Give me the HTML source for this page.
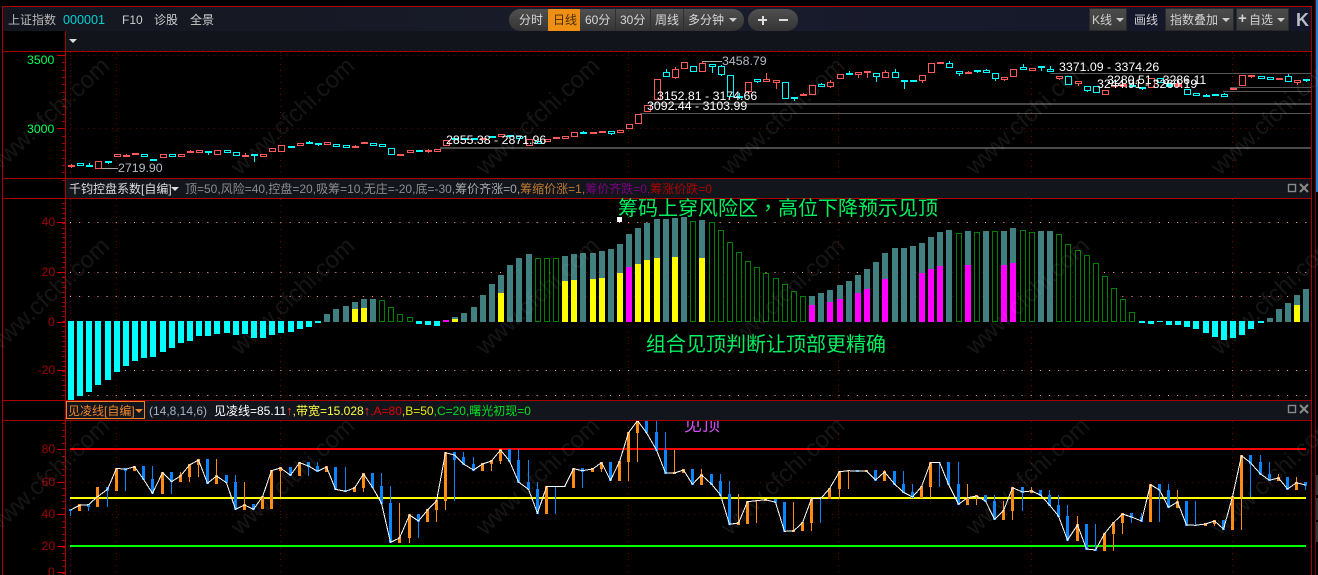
<!DOCTYPE html>
<html lang="zh">
<head>
<meta charset="utf-8">
<title>上证指数 K线</title>
<style>
html,body{margin:0;padding:0;background:#000;width:1318px;height:575px;overflow:hidden}
#r{position:relative;width:1318px;height:575px;overflow:hidden;background:#000;font-family:"Liberation Sans","Noto Sans CJK SC",sans-serif}
.a{position:absolute}
.t{position:absolute;white-space:nowrap;font-size:12px;line-height:14px}
.n{font-size:12.35px}
.ax{font-size:12.3px}
.up{display:inline-block;width:6.5px;font-size:13px;font-weight:bold;color:#ff3030;text-align:center;line-height:12px}
svg{position:absolute;left:0;top:0}
.pill{position:absolute;background:linear-gradient(#505050,#343434);border-radius:11px}
.btn{position:absolute;top:8px;height:23px;background:linear-gradient(#4c4c4c,#383838);border:1px solid #2a2a2a;box-sizing:border-box}
.car{position:absolute;width:0;height:0;border-left:4px solid transparent;border-right:4px solid transparent;border-top:4px solid #ccc}
.big{position:absolute;white-space:nowrap;font-size:20px;line-height:24px;color:#00f060;font-family:"Liberation Sans","Noto Sans CJK SC",sans-serif}
</style>
</head>
<body>
<div id="r">
  <div class="a" style="left:3px;top:7px;width:1308px;height:24px;background:linear-gradient(90deg,#14161f,#191c2b 50%,#14172a)"></div>
  <div class="a" style="left:66px;top:31px;width:1245px;height:20px;background:#12141b"></div>
  <div class="a" style="left:66px;top:179px;width:1245px;height:19px;background:#13151c"></div>
  <div class="a" style="left:66px;top:401px;width:1245px;height:19px;background:#13151c"></div>

  <svg id="c" width="1318" height="575" viewBox="0 0 1318 575"></svg>

  <!-- toolbar left -->
  <span class="t" style="left:8px;top:13px;color:#b9b9b9">上证指数</span>
  <span class="t" style="left:63px;top:13px;color:#00d2d2;font-size:12.6px">000001</span>
  <span class="t" style="left:122px;top:13px;color:#cfcfcf">F10</span>
  <span class="t" style="left:154px;top:13px;color:#cfcfcf">诊股</span>
  <span class="t" style="left:190px;top:13px;color:#cfcfcf">全景</span>
  <div class="car" style="left:69px;top:39px;border-top-color:#ddd"></div>

  <!-- center pills -->
  <div class="pill" style="left:509px;top:9px;width:235px;height:22px"></div>
  <div class="a" style="left:548px;top:9px;width:32px;height:22px;background:#ef9015"></div>
  <div class="a" style="left:615px;top:9px;width:1px;height:22px;background:#2e2e2e"></div>
  <div class="a" style="left:650px;top:9px;width:1px;height:22px;background:#2e2e2e"></div>
  <div class="a" style="left:683px;top:9px;width:1px;height:22px;background:#2e2e2e"></div>
  <span class="t" style="left:519px;top:13px;color:#d8d8d8">分时</span>
  <span class="t" style="left:553px;top:13px;color:#4a2c00">日线</span>
  <span class="t" style="left:585px;top:13px;color:#d8d8d8">60分</span>
  <span class="t" style="left:620px;top:13px;color:#d8d8d8">30分</span>
  <span class="t" style="left:655px;top:13px;color:#d8d8d8">周线</span>
  <span class="t" style="left:688px;top:13px;color:#d8d8d8">多分钟</span>
  <div class="car" style="left:729px;top:18px"></div>
  <div class="pill" style="left:748px;top:9px;width:50px;height:22px"></div>
  <div class="a" style="left:758px;top:19px;width:9px;height:2px;background:#ddd"></div>
  <div class="a" style="left:761.5px;top:15.5px;width:2px;height:9px;background:#ddd"></div>
  <div class="a" style="left:779px;top:19px;width:9px;height:2px;background:#ddd"></div>

  <!-- toolbar right -->
  <div class="btn" style="left:1089px;width:38px"></div>
  <span class="t" style="left:1092px;top:13px;color:#d0d0d0">K线</span>
  <div class="car" style="left:1116px;top:18px"></div>
  <span class="t" style="left:1134px;top:13px;color:#d0d0d0">画线</span>
  <div class="btn" style="left:1165px;width:69px"></div>
  <span class="t" style="left:1170px;top:13px;color:#d0d0d0">指数叠加</span>
  <div class="car" style="left:1222px;top:18px"></div>
  <div class="btn" style="left:1236px;width:53px"></div>
  <span class="t" style="left:1238px;top:12px;color:#d0d0d0;font-weight:bold;font-size:15px">+</span>
  <span class="t" style="left:1249px;top:13px;color:#d0d0d0">自选</span>
  <div class="car" style="left:1277px;top:18px"></div>
  <span class="t" style="left:1296px;top:9px;color:#b8bcc4;font-size:18px;line-height:22px;font-weight:bold">K</span>

  <!-- axis labels -->
  <span class="t ax" style="left:27px;top:53px;color:#00ff55">3500</span>
  <span class="t ax" style="left:27px;top:122px;color:#00ff55">3000</span>
  <span class="t ax" style="left:41.5px;top:215px;color:#a00000">40</span>
  <span class="t ax" style="left:41.5px;top:265px;color:#a00000">20</span>
  <span class="t ax" style="left:48px;top:315px;color:#a00000">0</span>
  <span class="t ax" style="left:37.5px;top:363px;color:#a00000">-20</span>
  <span class="t ax" style="left:41.5px;top:442px;color:#a00000">80</span>
  <span class="t ax" style="left:41.5px;top:475px;color:#a00000">60</span>
  <span class="t ax" style="left:41.5px;top:507px;color:#a00000">40</span>
  <span class="t ax" style="left:41.5px;top:539px;color:#a00000">20</span>
  <span class="t ax" style="left:48px;top:565px;color:#a00000">0</span>

  <!-- price labels -->
  <span class="t n" style="left:118px;top:161px;color:#b4bcc8">2719.90</span>
  <span class="t n" style="left:722px;top:54px;color:#b4bcc8">3458.79</span>
  <span class="t n" style="left:657px;top:89px;color:#fff">3152.81 - 3174.66</span>
  <span class="t n" style="left:647px;top:98.5px;color:#fff">3092.44 - 3103.99</span>
  <span class="t n" style="left:446px;top:132.5px;color:#fff">2855.38 - 2871.96</span>
  <span class="t n" style="left:1059px;top:60px;color:#fff">3371.09 - 3374.26</span>
  <span class="t n" style="left:1107px;top:73px;color:#fff">3280.51 - 3286.11</span>
  <span class="t n" style="left:1097px;top:77px;color:#fff">3244.91 - 3260.19</span>

  <!-- panel 2 header -->
  <span class="t" style="left:69px;top:182px;color:#dcdcdc">千钧控盘系数[自编]</span>
  <div class="car" style="left:171px;top:187px;border-top-color:#ddd"></div>
  <span class="t" style="left:185px;top:182px;color:#8c8c8c">顶=50,风险=40,控盘=20,吸筹=10,无庄=-20,底=-30,<span style="color:#a8a8a8">筹价齐涨=0,</span><span style="color:#c07a30">筹缩价涨=1,</span><span style="color:#800080">筹价齐跌=0,</span><span style="color:#b00000">筹涨价跌=0</span></span>

  <!-- panel 3 header -->
  <div class="a" style="left:66px;top:401px;width:79px;height:18px;border:1px solid #f08428;box-sizing:border-box"></div>
  <span class="t" style="left:68px;top:404px;color:#f08428">见凌线[自编]</span>
  <div class="car" style="left:135px;top:409px;border-top-color:#f08428"></div>
  <span class="t" style="left:149px;top:404px;color:#a4b4c4">(14,8,14,6)</span>
  <span class="t" style="left:214px;top:404px;color:#fff">见凌线=85.11<span class="up">↑</span><span style="color:#ffff40">,带宽=15.028</span><span class="up">↑</span><span style="color:#e00000">,A=80</span><span style="color:#e8e800">,B=50</span><span style="color:#00e020">,C=20,曙光初现=0</span></span>

  <!-- annotations -->
  <span class="big" style="left:618px;top:195px">筹码上穿风险区<span lang="zh-TW" style="font-family:'Noto Sans CJK TC',sans-serif">，</span>高位下降预示见顶</span>
  <span class="big" style="left:646px;top:333px">组合见顶判断让顶部更精确</span>
  <div class="a" style="left:680px;top:421px;width:44px;height:13px;overflow:hidden">
    <span class="t" style="left:4px;top:-6px;font-size:18px;line-height:20px;color:#d050f0">见顶</span>
  </div>
  <div class="a" style="left:617px;top:217px;width:5px;height:5px;background:#fff"></div>

  <svg id="w" width="1318" height="575" viewBox="0 0 1318 575" style="pointer-events:none"></svg>
</div>
<script>
(function(){
var svg=document.getElementById('c'),out='';
function X(i){return Math.round(68+9.15*i)}
function rect(x,y,w,h,f,s){out+='<rect x="'+x+'" y="'+y+'" width="'+w+'" height="'+h+'" fill="'+f+'"'+(s?' stroke="'+s+'"':'')+'/>'}
function line(a,b,c,d,s,w,da){out+='<line x1="'+a+'" y1="'+b+'" x2="'+c+'" y2="'+d+'" stroke="'+s+'" stroke-width="'+(w||1)+'"'+(da?' stroke-dasharray="'+da+'"':'')+'/>'}

/* dotted grids */
var vx=[70.5,116.5,280.5,628.5,838.5,1031.5,1232.5];
vx.forEach(function(x){
  line(x,52,x,178,'#7a0000',1,'1 5');line(x,199,x,400,'#7a0000',1,'1 5');line(x,421,x,575,'#7a0000',1,'1 5');
});
[55.5,128.5].forEach(function(y){line(70,y,1311,y,'#680000',1,'1 5')});
[222.5,272.5,296.5,370.5,395.5].forEach(function(y){
  line(70,y,1311,y,'#620000',1,'1 5');line(70,y,1311,y,'#c8c0c0',1,'1 8.15');
});
line(70,198.5,1311,198.5,'#c8c0c0',1,'1 8.15');
[482.5,514.5].forEach(function(y){line(70,y,1311,y,'#680000',1,'1 5')});

/* axis ticks */
var k,y;
for(k=0;k<=17;k++){y=Math.round(55+k*7.33);line(k%10==0?57:62,y+.5,65,y+.5,k%10==0?'#d00000':'#a00000')}
for(y=198;y<400;y+=4.93){line(62,Math.round(y)+.5,65,Math.round(y)+.5,'#a00000')}
[222,272,322,370].forEach(function(y){line(57,y+.5,65,y+.5,'#d00000')});
for(y=423;y<575;y+=6.5){line(62,Math.round(y)+.5,65,Math.round(y)+.5,'#a00000')}
[449,482,514,546,572].forEach(function(y){line(57,y+.5,65,y+.5,'#d00000')});

/* support lines */
[[440,148,2,'#4a4a4a'],[650,104,2,'#4a4a4a'],[640,113,1,'#555'],[1050,73,1,'#555'],[1230,87,1,'#555'],[1223,91,1,'#555']].forEach(function(a){
  line(a[0],a[1]+(a[2]==1?.5:0),1311,a[1]+(a[2]==1?.5:0),a[3],a[2]);
});
line(98,168.5,118,168.5,'#aaa');line(702,61.5,722,61.5,'#aaa');

/* candles: type,top,bot,hi,lo in 3x zoom coordinates */
var K=[
['r',495,499,491,503],['C',488,494],['c',495,499,488],['R',482,506],['c',484,488,0,491],['R',463,470],['r',465,469,463,471],['r',459,461],['C',461,472],['c',478,481,0,484],
['R',461,475],['C',461,466],['R',463,472],['r',453,457,450],['R',449,454],['c',454,460,0,466],['R',451,466],['C',449,454],['C',457,469],['r',464,467,460],
['c',463,467,0,487],['R',463,472],['R',445,457],['R',436,457],['c',438,440],['R',430,436],['c',427,430,424],['c',430,432,0,437],['R',427,436],['C',433,442],
['C',436,442],['r',438,440,435,442],['r',427,430],['C',430,436],['C',433,442],['C',445,466],['r',463,465,0,468],['R',451,460],['c',451,455],['r',451,455,448,460],
['R',448,457],['R',421,439],['c',414,418],['c',415,418],['c',414,418],['r',414,418],['c',408,412],['R',403,409],['c',406,410],['C',409,417,0,424],
['R',418,439],['C',424,433],['R',416,421],['r',412,414],['R',409,415],['R',397,412],['c',396,400,394],['r',397,400,0,403],['r',394,398],['C',394,400,0,405],
['R',391,400],['R',373,388],['R',343,373],['R',316,337],['R',238,301],['C',217,232,208],['R',207,235,200,238],['R',187,208],['C',199,217],['R',190,217,184],
['C',193,202,0,220],['C',199,226,196,229],['C',226,292],['c',289,292,280,298],['R',247,277,0,283],['C',238,244,0,250],['R',238,244,220],['R',241,250,0,268],['C',247,298],['c',292,295,0,304],
['r',283,287,280,289],['R',256,286],['C',253,259,250],['R',247,262,241,265],['R',223,238],['c',219,221,214,226],['R',217,222,0,235],['r',214,219,0,235],['C',220,231,0,247],['R',217,235,211],
['C',217,235,208],['c',241,244,0,266],['c',241,244],['R',226,244,0,248],['R',190,220],['r',187,190],['C',190,205,184],['C',214,223,0,227],['r',217,219,212,223],['c',211,214,0,220],
['C',211,220,207],['C',220,238,0,242],['R',230,238,0,244],['R',208,232],['C',202,211,193],['R',205,214],['c',199,205,0,214],['C',208,215,199],['R',229,235,0,239],['C',229,256],
['R',244,253,0,259],['C',259,272,0,277],['C',259,280],['R',271,286],['r',256,262],['r',253,262],['c',255,259],['c',261,265,0,271],['R',235,265],['C',235,250],
['c',250,262],['r',250,262],['C',268,286],['C',280,286,0,289],['c',286,289,283],['c',283,286],['C',283,289,279,292],['r',265,269],['R',226,259],['r',226,230,0,234],
['C',229,235],['C',232,238],['r',235,238,0,241],['C',229,247,223],['R',241,250,0,254],['c',238,241,0,247]
];
var RED='#ff5858',CY='#00ffff';
K.forEach(function(d,i){
  var x=X(i),t=d[0],col=(t=='r'||t=='R')?RED:CY,a=Math.round(d[1]/3),b=Math.round(d[2]/3),
      h=d[3]?Math.round(d[3]/3):a,l=d[4]?Math.round(d[4]/3):b,cx=x+3.5;
  if(h<a)line(cx,h,cx,a,col);
  if(l>b)line(cx,b,cx,l,col);
  if(t=='R'||t=='C')rect(x+.5,a+.5,6,Math.max(b-a-1,2),'#000',col);
  else rect(x,a,7,Math.max(b-a,2),col);
});

/* indicator bars */
var B=[['c',660],['c',648],['c',636],['c',615],['c',600],['c',576],['c',558],['c',543],['c',534],['c',531],['c',516],['c',504],['c',489],['c',483],['c',468],['c',468],['c',462],['c',459],['c',465],['c',462],['c',474],['c',474],['c',465],['c',459],['c',456],['c',447],['c',441],['c',429],
['t',402],['t',387],['t',378],['y',366,387],['y',357,384],['t',357],['g',360],['g',381],['g',402],['g',411],['c',432],['c',435],['c',438],
['m',420,420],['y',411,417],['t',399],['t',381],['t',345],['t',312],['y',285,339],['t',255],['t',234],['t',222],['g',234],['g',234],['g',234],['y',228,303],['y',222,300],['t',219],['y',219,297],['y',213,294],['t',207],['y',192,279],['m',162,261],['y',144,252],['y',129,240],['y',117,234],['t',117],['y',114,231],['t',111],['g',123],['y',120,234],['g',126],['g',150],['g',186],['g',216],['g',243],['g',261],['g',279],['g',294],['g',312],['g',333],['g',348],['m',348,375],['t',339],['m',330,366],['m',315,357],['t',303],['m',285,339],['m',267,327],['t',246],
['m',219,297],['t',204],['t',204],['t',198],['m',189,279],['m',171,267],['m',156,258],['t',150],['g',159],['m',153,255],['g',156],['t',153],['g',153],['m',153,255],['m',144,249],['g',150],['g',156],['t',153],['t',153],['g',162],['g',192],['g',210],['g',225],['g',249],['g',288],['g',324],['g',357],['g',396],
['c',429],['c',432],['c',426],['c',435],['c',435],['c',441],['c',447],['c',459],['c',471],['c',480],['c',474],['c',465],['c',447],['c',429],
['t',414],['t',387],['t',369],['y',345,375],['t',327]];
function Y2(z){return Math.round(180+z/3)}
B.forEach(function(d,i){
  var x=X(i),t=d[0],a=Y2(d[1]),b=322;
  if(t=='c'){rect(x,321,6,Math.max(a-321,1),'#00ffff');return}
  if(t=='g'){rect(x+.5,a+.5,5,b-a-1,'#000','#008000');return}
  rect(x,a,6,b-a,'#408080');
  if(t=='y')rect(x,Y2(d[2]),6,b-Y2(d[2]),'#ffff00');
  if(t=='m')rect(x,Y2(d[2]),6,b-Y2(d[2]),'#ff00ff');
});

/* level lines */
out+='<rect x="70" y="448" width="1236" height="2" fill="#ff0000"/><rect x="70" y="497" width="1236" height="2" fill="#ffff00"/><rect x="70" y="545" width="1236" height="2" fill="#00ff00"/>';

/* oscillator: colour(1 blue,0 orange),top,bot,hi,lo,line */
var L=[
[1,327,333,0,348,330],[0,312,332,0,0,316],[1,312,320,0,333,314],[0,261,321,0,0,290],[1,262,273,0,321,268],[0,204,273,0,0,205],[1,204,213,0,273,208],[0,198,213,0,0,200],[1,198,240,0,0,238],[1,237,282,198,0,280],
[0,216,282,0,0,218],[1,216,246,0,282,245],[0,225,246,216,0,228],[0,192,231,0,246,195],[0,177,195,0,231,180],[1,177,252,0,0,250],[0,225,252,177,0,228],[1,225,250,0,0,248],[1,246,330,225,0,328],[0,312,330,246,0,315],
[1,312,330,0,0,328],[0,288,327,0,0,290],[0,210,327,0,0,212],[0,201,213,0,291,204],[1,201,228,0,0,226],[0,186,228,0,0,188],[1,186,201,0,228,198],[1,198,216,186,0,214],[0,198,216,0,0,201],[1,201,270,0,0,268],
[1,270,276,201,0,274],[0,261,276,0,0,264],[0,219,264,0,276,222],[1,219,264,0,0,262],[1,258,312,219,0,310],[1,309,429,258,0,427],[0,411,429,309,0,414],[0,342,414,0,429,345],[1,342,366,0,414,363],[0,327,366,0,0,330],
[0,300,330,0,366,303],[0,156,303,0,330,158],[1,156,180,0,303,165],[1,171,195,156,0,192],[1,192,213,171,0,210],[0,189,213,0,0,192],[0,180,192,0,213,183],[0,147,183,0,192,150],[1,147,186,0,0,183],[1,180,249,147,0,246],
[1,246,270,180,0,268],[1,267,342,246,0,340],[0,258,342,0,0,260],[1,258,262,0,342,260],[1,258,262,0,0,260],[0,204,264,0,0,206],[1,204,216,0,264,212],[0,204,216,0,0,207],[0,186,207,0,216,188],[1,186,243,0,0,241],
[0,183,243,0,0,185],[0,96,186,0,243,98],[0,60,99,0,186,62],[1,60,99,0,0,98],[1,96,153,60,0,150],[1,150,222,96,0,219],[0,216,222,150,0,219],[0,207,219,0,0,210],[1,207,255,0,0,253],[0,222,255,207,0,225],
[1,222,255,0,0,252],[1,243,288,222,0,285],[1,282,375,243,0,373],[0,366,375,282,0,369],[0,303,372,0,0,305],[0,300,303,0,369,302],[0,297,303,0,0,299],[1,297,309,0,0,307],[1,306,396,0,0,394],[0,390,396,306,0,393],
[0,366,393,0,0,368],[0,294,369,0,393,296],[1,294,297,0,369,296],[0,264,297,0,0,266],[0,213,267,0,297,215],[0,211,214,0,267,212],[1,210,216,0,0,213],[0,210,216,0,0,213],[1,210,243,0,0,240],
[0,213,243,210,0,216],[1,213,255,0,0,252],[1,252,279,213,0,277],[1,276,294,252,0,291],[0,258,294,0,0,260],[0,186,262,0,294,188],[1,186,189,0,261,187],[1,186,255,0,0,253],[1,252,315,186,0,313],[0,291,315,252,0,293],
[0,285,291,0,315,288],[1,285,306,0,0,303],[1,303,360,285,0,358],[0,330,360,303,0,332],[0,261,333,0,360,263],[1,261,279,0,333,276],[0,270,279,261,0,273],[1,270,288,0,0,285],[1,285,318,270,0,315],[1,315,351,285,0,348],
[1,348,423,315,0,420],[0,372,423,348,0,375],[1,372,450,0,0,447],[1,447,453,372,0,450],[0,399,453,0,0,401],[0,366,402,0,453,368],[0,339,369,0,402,342],[1,339,354,0,369,351],[1,351,366,339,0,363],[0,252,366,0,0,254],
[1,252,273,0,366,270],[1,270,324,252,0,322],[0,303,324,270,0,306],[1,303,378,0,0,375],[1,375,378,303,0,376],[0,369,378,0,0,372],[0,360,372,0,378,363],[1,360,390,0,0,387],[0,288,390,0,0,290],[0,165,291,0,390,167],
[1,165,192,0,291,188],[1,186,225,165,0,222],[1,222,243,186,0,241],[0,231,243,222,0,234],[1,231,270,0,0,267],[0,246,270,231,0,248],[1,246,258,0,270,255]
];
function Y3(z){return Math.max(421,400+z/3)}
var pts='';
L.forEach(function(d,i){
  var x=X(i),col=d[0]?'#0a84ff':'#ff8c14',a=Math.round(Y3(d[1])),b=Math.round(Y3(d[2])),
      h=d[3]?Math.round(Y3(d[3])):a,l=d[4]?Math.round(Y3(d[4])):b,cx=x+2.5;
  if(h<a)line(cx,h,cx,a,col);
  if(l>b)line(cx,b,cx,l,col);
  rect(x+1,a,3,Math.max(b-a,1),col);
  pts+=cx+','+(400+d[5]/3).toFixed(1)+' ';
});
out+='<clipPath id="p3"><rect x="66" y="421" width="1245" height="154"/></clipPath><polyline clip-path="url(#p3)" points="'+pts+'" fill="none" stroke="#fff" stroke-width="1" shape-rendering="crispEdges"/>';

/* red frame & dividers */
var R='#a80000';
rect(2,6,1310,1,R);
rect(2,6,1,569,R);
rect(1311,6,1,569,R);
rect(65,31,1,544,R);
rect(3,51,1308,1,R);
rect(3,178,1308,1,R);
rect(3,198,1308,1,R);
rect(3,400,1308,1,R);
rect(3,420,1308,1,'#a00000');

/* window icons */
[184,405].forEach(function(t){
  out+='<rect x="1288.5" y="'+(t+.5)+'" width="7" height="7" fill="none" stroke="#8a8a8a" stroke-width="1.4"/>';
  line(1300,t,1308,t+8,'#8a8a8a',2);line(1308,t,1300,t+8,'#8a8a8a',2);
});

/* right strip */
rect(1315,0,1,575,'#7a0000');
rect(1316,0,2,192,'#1d80d0');
rect(1316,475,2,20,'#333');rect(1316,498,2,22,'#333');rect(1316,522,2,20,'#333');

svg.innerHTML=out;

/* watermark */
var wm='';
[176,356,536].forEach(function(y){
  [-5,240,485,730,975,1220].forEach(function(x){
    wm+='<text transform="translate('+x+','+y+') rotate(-43)" font-family="Liberation Sans,sans-serif" font-size="24" fill="#b0b0b0" fill-opacity="0.12">www.cfchi.com</text>';
  });
});
document.getElementById('w').innerHTML=wm;
})();
</script>
</body>
</html>
